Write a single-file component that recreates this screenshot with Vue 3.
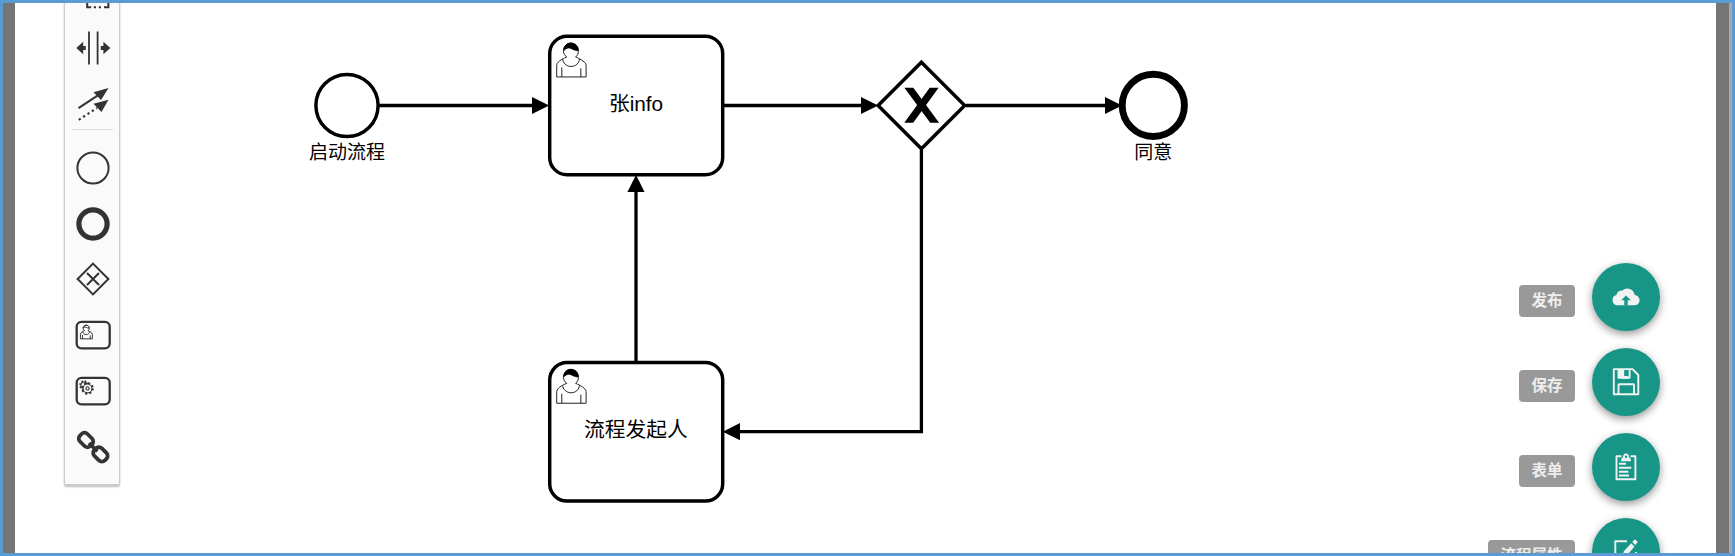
<script setup>
const head =
  'm15,12 c0.909,-0.845 1.594,-2.049 1.594,-3.385 0,-2.554 -1.805,-4.622 -4.357,-4.622 -2.552,0 -4.288,2.068 -4.288,4.622 0,1.348 0.974,2.562 1.896,3.405 -0.529,0.187 -5.669,2.097 -5.794,4.756 v6.718 h17 v-6.718 c0,-2.298 -5.528,-4.595 -6.051,-4.776z m-8,6 l0,5.5 m11,0 l0,-5'
const collar =
  'm15,12 m2.162,1.009 c0,2.447 -2.158,4.431 -4.821,4.431 -2.665,0 -4.822,-1.981 -4.822,-4.431'
const hair =
  'm15,12 m-6.9,-3.8 c0,0 2.251,-2.358 4.274,-1.177 2.024,1.181 4.221,1.537 4.124,0.965 -0.098,-0.57 -0.117,-3.791 -4.191,-4.136 -3.572,0.001 -4.208,3.367 -4.207,4.348z'

const tasks = [
  { y: 36.3, label: '张info' },
  { y: 362.6, label: '流程发起人' },
]
const tools = ['lasso', 'space', 'connect', 'sep', 'start', 'end', 'gateway', 'user', 'service', 'link']
const actions = [
  { label: '发布', icon: 'cloud' },
  { label: '保存', icon: 'save' },
  { label: '表单', icon: 'form' },
  { label: '流程属性', icon: 'edit' },
]
</script>

<template>
  <main class="frame">
    <section class="sheet">
      <svg class="canvas" viewBox="3 3 1729 550" width="1729" height="550">
        <g class="flow">
          <path d="M379 105.5H536" /><path d="M724 105.5H864" />
          <path d="M966 105.5H1108" /><path d="M636 361V189" />
          <path d="M921.4 150V431.7H736" />
        </g>
        <g class="tips">
          <path d="M532 96.9 549.2 105.5 532 114.1z" />
          <path d="M861 96.9 878.2 105.5 861 114.1z" />
          <path d="M1105 96.9 1122 105.5 1105 114.1z" />
          <path d="M627.4 192 636 175 644.6 192z" />
          <path d="M740 423.1 722.8 431.7 740 440.3z" />
        </g>
        <circle class="shape" cx="347" cy="105.5" r="31.1" />
        <circle class="shape heavy" cx="1153.3" cy="105.4" r="31.1" />
        <path class="shape" d="M921.4 62.3 964.7 105.5 921.4 148.7 878.1 105.5z" />
        <g class="tips">
          <path d="M904.4 87.7h8.9l25.8 35h-8.9z" /><path d="M938.6 87.7h-8.9l-25.4 35h8.9z" />
        </g>
        <g v-for="t in tasks" :key="t.label" :transform="`translate(549.7 ${t.y})`">
          <rect class="shape" width="173" height="138.4" rx="17.3" />
          <g class="person" transform="scale(1.73)">
            <path :d="head" /><path :d="collar" /><path class="solid" :d="hair" />
          </g>
          <text class="name" x="86.3" y="74.8">{{ t.label }}</text>
        </g>
        <text class="caption" x="347" y="158.5">启动流程</text>
        <text class="caption" x="1153.3" y="158.5">同意</text>
      </svg>

      <nav class="palette">
        <template v-for="k in tools" :key="k">
          <hr v-if="k === 'sep'" />
          <div v-else class="tool">
            <svg viewBox="-18 -18 36 36" width="36" height="36">
              <path v-if="k === 'lasso'" d="M-5.8 10.5V15.2h4M.8 15.2h2.2M5.8 15.2h2.2M11 15.2h4.4V10.5" class="line" />
              <template v-else-if="k === 'space'">
                <path class="line thin" d="M-4-16.5V16.5M4.6-16.5V16.5" />
                <path d="M-16.7 0-9.8-6.2V-2H-7.2V2H-9.8V6.2zM17.3 0 10.4-6.2V-2H7.8V2h2.6V6.2z" />
              </template>
              <template v-else-if="k === 'connect'">
                <path class="line" d="M-14.5 4.2 6-9.3" />
                <path class="line dots" d="M-14.2 15.8 4 4" />
                <path d="M15.5-16 8-4 0.5-11.8zM15.5-4.3 8.5 8 0.5-.2z" />
              </template>
              <circle v-else-if="k === 'start'" class="line" r="15.6" />
              <circle v-else-if="k === 'end'" class="line fat" r="14.1" />
              <template v-else-if="k === 'gateway'">
                <path class="line" d="M0-15.4 15.4 0 0 15.4-15.4 0z" />
                <path class="line" d="M-6-6 6 6M6-6-6 6" />
              </template>
              <template v-else-if="k === 'user' || k === 'service'">
                <rect class="line box" x="-16.3" y="-13.2" width="33" height="26.6" rx="4.8" />
                <g v-if="k === 'user'" class="person mini" transform="translate(-15.4 -12.6) scale(.7)">
                  <path :d="head" /><path :d="collar" /><path :d="hair" />
                </g>
                <template v-else>
                  <circle class="line teeth2" cx="-8.9" cy="-5.8" r="4.1" />
                  <circle class="gear" cx="-8.9" cy="-5.8" r="3.2" />
                  <circle class="line teeth3" cx="-5.5" cy="-2.6" r="5.4" />
                  <circle class="gear" cx="-5.5" cy="-2.6" r="4.4" />
                  <circle class="gear" cx="-5.5" cy="-2.6" r="1.6" />
                </template>
              </template>
              <template v-else>
                <rect class="line chain" x="-7.4" y="-5.3" width="14.8" height="10.6" rx="4.2" transform="translate(-7 -7) rotate(45)" />
                <rect class="line chain" x="-7.4" y="-5.3" width="14.8" height="10.6" rx="4.2" transform="translate(7.4 7.4) rotate(45)" />
                <path class="line chain" d="M-4-4 4.4 4.4" />
              </template>
            </svg>
          </div>
        </template>
      </nav>

      <aside class="actions">
        <div v-for="a in actions" :key="a.icon" class="action">
          <span class="tag">{{ a.label }}</span>
          <button class="fab">
            <svg viewBox="-17 -17 34 34" width="34" height="34">
              <template v-if="a.icon === 'cloud'">
                <path class="fill" d="M-8.2 8.3A5.3 5.3 0 0 1-9.6-2.1 5.3 5.3 0 0 1-3.6-6.4 7.3 7.3 0 0 1 8.6-1.9 5.1 5.1 0 0 1 8.4 8.3z" />
                <path class="cut" d="M-1.7 8.4V3.3H-4.8L0-1.4 4.8 3.3H1.7V8.4z" />
              </template>
              <template v-else-if="a.icon === 'save'">
                <path class="stroke" d="M-12.2-12.9H6.5L12.3-7V12.2H-12.2z" />
                <path class="stroke" d="M-7.5 12V3Q-7.5 2.3-6.8 2.3H7.4Q8 2.3 8 3V12M3.6-12.5V-4.3H-4" />
                <path class="fill" d="M-8.5-12.5H-1.8V-6H2V-3.3H-7.5Q-8.5-3.3-8.5-4.3z" />
              </template>
              <template v-else-if="a.icon === 'form'">
                <path class="stroke" d="M-4.5-10.7H-9.5V12.2H9.4V-10.7H4.5M-7-3.3H0M-7 .8H5.3M-7 4.7H2.3M-7 8.5H3" />
                <path class="fill" fill-rule="evenodd" d="M-5-5.8Q-5-9.4-2.8-9.8A2.9 2.9 0 1 1 2.8-9.8Q5-9.4 5-5.8zM-1.2-10.2a1.2 1.2 0 1 0 2.4 0a1.2 1.2 0 1 0-2.4 0z" />
              </template>
              <template v-else>
                <path class="stroke" d="M1-10.7H-10.7V12H10V0" />
                <path class="fill" d="M-3.5 4.8-2.2-.8 5.2-8.8 8.5-5.6 1 3.3zM6.2-9.9 8.5-12.3Q9-12.8 9.5-12.3L11.3-10.4Q11.8-9.9 11.3-9.4L9.4-7z" />
              </template>
            </svg>
          </button>
        </div>
      </aside>
    </section>
  </main>
</template>

<style scoped>
.frame {
  box-sizing: border-box;
  width: 1735px;
  height: 556px;
  border: 3px solid #5b9bd5;
  background: #737674;
  overflow: hidden;
  font-family: "Liberation Sans", "Noto Sans CJK SC", sans-serif;
}
.sheet {
  position: relative;
  box-sizing: border-box;
  width: 1729px;
  height: 550px;
  border-left: 12px solid #737674;
  border-right: 3px solid #a9a9a9;
  background: linear-gradient(90deg, #fff 1701px, #737674 1701px);
  overflow: hidden;
}
.canvas { display: block; margin-left: -12px; }
.flow { fill: none; stroke: #000; stroke-width: 3.3; }
.tips { fill: #000; }
.shape { fill: #fff; stroke: #000; stroke-width: 3.46; }
.heavy { stroke-width: 6.9; }
.person { fill: #fff; stroke: #000; stroke-width: 0.5; }
.person .solid { fill: #000; }
.mini { fill: none; stroke: #333; stroke-width: 1.4; }
.name, .caption { text-anchor: middle; fill: #000; }
.name { font-size: 20.76px; }
.caption { font-size: 19.03px; }

.palette {
  position: absolute;
  top: -46px;
  left: 49px;
  box-sizing: border-box;
  width: 56px;
  height: 529px;
  padding-top: 6.5px;
  background: #fafafa;
  border: 1px solid #ccc;
  border-bottom-width: 2px;
  border-radius: 2px;
  box-shadow: 0 1px 2px #bbb;
}
.tool { display: flex; justify-content: center; align-items: center; height: 55.8px; padding-left: 2.6px; }
.palette hr { width: 41px; height: 1px; margin: -2.5px auto 9.5px; border: 0; background: #ddd; }
.tool svg { display: block; fill: #333; overflow: visible; }
.line { fill: none; stroke: #333; stroke-width: 2; }
.thin { stroke-width: 1.8; }
.dots { stroke-width: 2.2; stroke-dasharray: 2.2 3; }
.fat { stroke-width: 5.2; }
.box { stroke-width: 2.3; }
.chain { stroke-width: 3.8; }
.gear { fill: #fafafa; stroke: #333; stroke-width: 1.1; }
.teeth2 { stroke-width: 1.7; stroke-dasharray: 1.6 1.62; }
.teeth3 { stroke-width: 1.8; stroke-dasharray: 2.1 2.14; }

.actions {
  position: absolute;
  top: 260px;
  right: 69px;
  display: flex;
  flex-direction: column;
  gap: 17px;
}
.action { display: flex; justify-content: flex-end; align-items: center; gap: 17px; height: 68px; }
.tag {
  box-sizing: border-box;
  height: 32px;
  margin-top: 7px;
  padding: 0 12.5px;
  border-radius: 4px;
  background: #999;
  color: #eee;
  font-size: 15.5px;
  font-weight: 700;
  line-height: 32px;
  white-space: nowrap;
}
.fab {
  display: flex;
  justify-content: center;
  align-items: center;
  width: 68px;
  height: 68px;
  padding: 0;
  border: 0;
  border-radius: 50%;
  background: #179587;
  box-shadow: 0 3px 8px rgba(0, 0, 0, 0.42);
}
.fill { fill: #f1f3f2; }
.cut { fill: #179587; }
.stroke { fill: none; stroke: #f1f3f2; stroke-width: 1.9; stroke-linejoin: round; }
</style>

<style>
body { margin: 0; overflow: hidden; }
</style>
